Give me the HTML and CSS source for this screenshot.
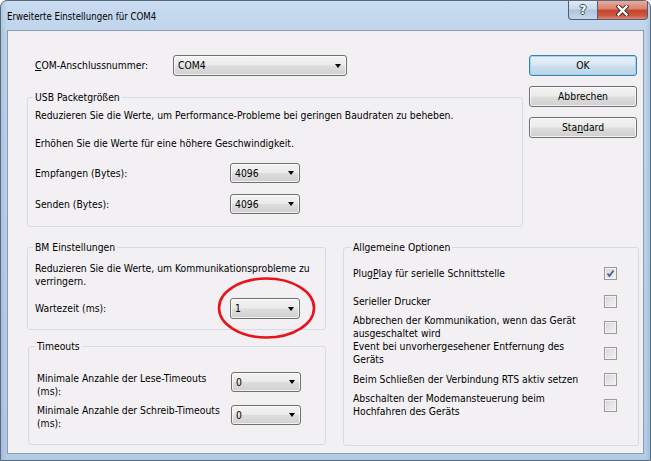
FILE: index.html
```html
<!DOCTYPE html>
<html lang="de">
<head>
<meta charset="utf-8">
<title>Erweiterte Einstellungen für COM4</title>
<link rel="stylesheet" href="styles.css">
</head>
<body>
<div class="window">
  <div class="titlebar">
    <span class="title">Erweiterte Einstellungen für COM4</span>
    <div class="caption-btns">
      <div class="cbtn help"><span class="qmark">?</span></div>
      <div class="cbtn close">
        <svg width="13" height="11" viewBox="0 0 13 11"><path d="M2.5 1.5 L10.5 9.5 M10.5 1.5 L2.5 9.5" stroke="#3b2a2a" stroke-width="4.2" stroke-linecap="square" fill="none"/><path d="M2.5 1.5 L10.5 9.5 M10.5 1.5 L2.5 9.5" stroke="#fff" stroke-width="2.4" stroke-linecap="square" fill="none"/></svg>
      </div>
    </div>
  </div>
  <div class="client">
    <div class="top">
      <div class="top-left">
        <div class="com-row">
          <span class="com-lbl"><u>C</u>OM-Anschlussnummer:</span>
          <div class="combo combo-com"><span>COM4</span><i class="arrow"></i></div>
        </div>
        <fieldset class="group usb">
          <legend>USB Packetgrößen</legend>
          <p class="txt usb-l1">Reduzieren Sie die Werte, um Performance-Probleme bei geringen Baudraten zu beheben.</p>
          <p class="txt usb-l2">Erhöhen Sie die Werte für eine höhere Geschwindigkeit.</p>
          <div class="frow usb-r1"><span class="flbl">Empfangen (Bytes):</span><div class="combo small"><span>4096</span><i class="arrow"></i></div></div>
          <div class="frow usb-r2"><span class="flbl">Senden (Bytes):</span><div class="combo small"><span>4096</span><i class="arrow"></i></div></div>
        </fieldset>
      </div>
      <div class="buttons">
        <div class="btn default">OK</div>
        <div class="btn">Abbrechen</div>
        <div class="btn">Sta<u>n</u>dard</div>
      </div>
    </div>
    <div class="bottom">
      <div class="left-col">
        <fieldset class="group bm">
          <legend>BM Einstellungen</legend>
          <p class="txt bm-l1">Reduzieren Sie die Werte, um Kommunikationsprobleme zu<br>verringern.</p>
          <div class="frow bm-r1"><span class="flbl">Wartezeit (ms):</span><div class="combo small tall"><span>1</span><i class="arrow"></i></div></div>
        </fieldset>
        <fieldset class="group timeouts">
          <legend>Timeouts</legend>
          <div class="trow trow1"><span class="tlbl">Minimale Anzahle der Lese-Timeouts<br>(ms):</span><div class="combo small"><span>0</span><i class="arrow"></i></div></div>
          <div class="trow trow2"><span class="tlbl">Minimale Anzahle der Schreib-Timeouts<br>(ms):</span><div class="combo small"><span>0</span><i class="arrow"></i></div></div>
        </fieldset>
      </div>
      <fieldset class="group opts">
        <legend>Allgemeine Optionen</legend>
        <div class="opt opt1"><span class="otxt">Plug<u>P</u>lay für serielle Schnittstelle</span><span class="cb checked"><svg width="11" height="11" viewBox="0 0 11 11"><path d="M2.5 5.5 L4.5 8 L8.5 2.5" stroke="#4c5f8e" stroke-width="1.8" fill="none"/></svg></span></div>
        <div class="opt"><span class="otxt">Serieller Drucker</span><span class="cb"></span></div>
        <div class="opt"><span class="otxt">Abbrechen der Kommunikation, wenn das Gerät<br>ausgeschaltet wird</span><span class="cb"></span></div>
        <div class="opt"><span class="otxt">Event bei unvorhergesehener Entfernung des<br>Geräts</span><span class="cb"></span></div>
        <div class="opt"><span class="otxt">Beim Schließen der Verbindung RTS aktiv setzen</span><span class="cb"></span></div>
        <div class="opt"><span class="otxt">Abschalten der Modemansteuerung beim<br>Hochfahren des Geräts</span><span class="cb"></span></div>
      </fieldset>
    </div>
    <svg class="mark" width="99" height="62" viewBox="0 0 99 62"><ellipse cx="49.5" cy="31" rx="47.5" ry="29.5" fill="none" stroke="#e8141b" stroke-width="2.6"/></svg>
  </div>
</div>
</body>
</html>
```
FILE: styles.css
```css
* { box-sizing: border-box; }
html, body { margin: 0; padding: 0; }
body {
  width: 651px;
  height: 461px;
  overflow: hidden;
  background: #ffffff;
  font-family: "DejaVu Sans Condensed", "DejaVu Sans", sans-serif;
  font-size: 10.3px;
  color: #000;
}
u { text-decoration: underline; text-underline-offset: 1px; }

.window {
  width: 651px;
  height: 461px;
  border: 1px solid #55697f;
  border-radius: 7px 7px 0 0;
  background: linear-gradient(90deg, rgba(120,150,185,0.25) 0, rgba(255,255,255,0) 6px, rgba(255,255,255,0) 645px, rgba(120,150,185,0.25) 100%), linear-gradient(180deg, #c9dcf0 0, #bfd4eb 30px, #b4cbe5 100%);
  display: flex;
  flex-direction: column;
}
.titlebar {
  height: 29px;
  display: flex;
  justify-content: space-between;
  align-items: flex-start;
  padding: 0 2px 0 6px;
}
.title {
  margin-top: 10px;
  font-size: 9.6px;
  line-height: 12px;
  color: #000;
}
.caption-btns { display: flex; height: 19px; }
.cbtn {
  height: 19px;
  border: 1px solid #4f5e73;
  border-top: none;
  display: flex;
  align-items: center;
  justify-content: center;
}
.help {
  width: 29px;
  border-right: none;
  border-radius: 0 0 0 4px;
  background: linear-gradient(180deg, #e1eaf4 0, #c9d8ea 45%, #aec3dc 50%, #c6d7ea 100%);
}
.qmark {
  font-family: "DejaVu Sans", sans-serif;
  font-weight: bold;
  font-size: 12px;
  line-height: 12px;
  color: #fff;
  text-shadow: 1px 0 0 #3d4b5e, -1px 0 0 #3d4b5e, 0 1px 0 #3d4b5e, 0 -1px 0 #3d4b5e;
}
.close {
  width: 51px;
  border-radius: 0 0 4px 0;
  background: linear-gradient(180deg, #e9ab9d 0, #d9806e 45%, #c5442f 50%, #cf553d 80%, #e08a72 100%);
}

.client {
  margin-left: 6px;
  width: 637px;
  height: 424px;
  border: 1px solid #8b9cb1;
  background: #f2f0f3;
  position: relative;
}

.top { display: flex; padding-left: 19px; align-items: flex-start; }
.top-left { width: 496px; }
.com-row { display: flex; align-items: center; margin-top: 24px; height: 21px; }
.com-lbl { width: 146px; padding-left: 8px; line-height: 13px; }
.combo-com { width: 174px; height: 21px; }

.combo {
  display: flex;
  align-items: center;
  justify-content: space-between;
  padding: 0 4px 0 4px;
  border: 1px solid #707070;
  border-radius: 3px;
  background: linear-gradient(180deg, #f3f3f3 0, #ebebeb 48%, #dddddd 52%, #d0d0d0 100%);
  box-shadow: inset 0 0 0 1px rgba(255,255,255,0.7);
  line-height: 13px;
}
.combo.small { width: 70px; height: 20px; }
.combo.tall { height: 21px; }
.arrow {
  width: 0;
  height: 0;
  border-left: 3.5px solid transparent;
  border-right: 3.5px solid transparent;
  border-top: 4px solid #000;
  margin-right: 1px;
}

.group {
  margin: 0;
  border: 1px solid #d3dce3;
  border-radius: 3px;
  min-width: 0;
}
.group legend {
  padding: 0 2px;
  margin-left: -2px;
  line-height: 13px;
}
.txt { margin: 0; line-height: 13px; white-space: nowrap; }
.frow { display: flex; align-items: center; }
.flbl { width: 195px; line-height: 13px; }

.usb { margin-top: 15px; padding: 0 7px 12px; }
.usb-l1 { margin-top: 5px; }
.usb-l2 { margin-top: 15px; }
.usb-r1 { margin-top: 13px; }
.usb-r2 { margin-top: 11px; }

.buttons {
  margin-left: 6px;
  margin-top: 24px;
  width: 108px;
  display: flex;
  flex-direction: column;
  gap: 10px;
}
.btn {
  height: 21px;
  border: 1px solid #707070;
  border-radius: 3px;
  background: linear-gradient(180deg, #f3f3f3 0, #ebebeb 48%, #dddddd 52%, #cfcfcf 100%);
  box-shadow: inset 0 0 0 1px rgba(255,255,255,0.75);
  display: flex;
  align-items: center;
  justify-content: center;
  line-height: 13px;
}
.btn.default {
  border-color: #3c7fb1;
  background: linear-gradient(180deg, #e6f0f8 0, #dae7f2 48%, #cadeee 52%, #bfd5e8 100%);
  box-shadow: inset 0 0 0 1px #9fd6f2;
}

.bottom { display: flex; padding-left: 19px; margin-top: 14px; align-items: flex-start; }
.left-col { width: 299px; display: flex; flex-direction: column; }
.bm { padding: 0 7px 10px; }
.bm-l1 { margin-top: 8px; }
.bm-r1 { margin-top: 10px; }

.timeouts { margin: 10px 0 0 1px; width: 298px; padding: 0 8px 14px; }
.trow { display: flex; align-items: flex-start; }
.tlbl { width: 194px; line-height: 13px; white-space: nowrap; }
.trow1 { margin-top: 19px; }
.trow2 { margin-top: 6px; }
.trow2 .combo { margin-top: 1px; }

.opts { margin-left: 17px; width: 296px; padding: 0 21px 27px 9px; }
.opt {
  display: flex;
  justify-content: space-between;
  align-items: center;
  height: 26px;
}
.opt1 { margin-top: 6px; margin-bottom: 2px; }
.otxt { line-height: 13px; white-space: nowrap; }
.cb {
  width: 13px;
  height: 13px;
  flex: none;
  border: 1px solid #9a9a9a;
  background: linear-gradient(135deg, #d6d6d6 0, #e8e8e8 60%, #f6f6f6 100%);
  box-shadow: inset 0 0 0 1px #f2f2f2;
  display: flex;
  align-items: center;
  justify-content: center;
}

.mark {
  position: absolute;
  left: 209px;
  top: 246px;
}
```
